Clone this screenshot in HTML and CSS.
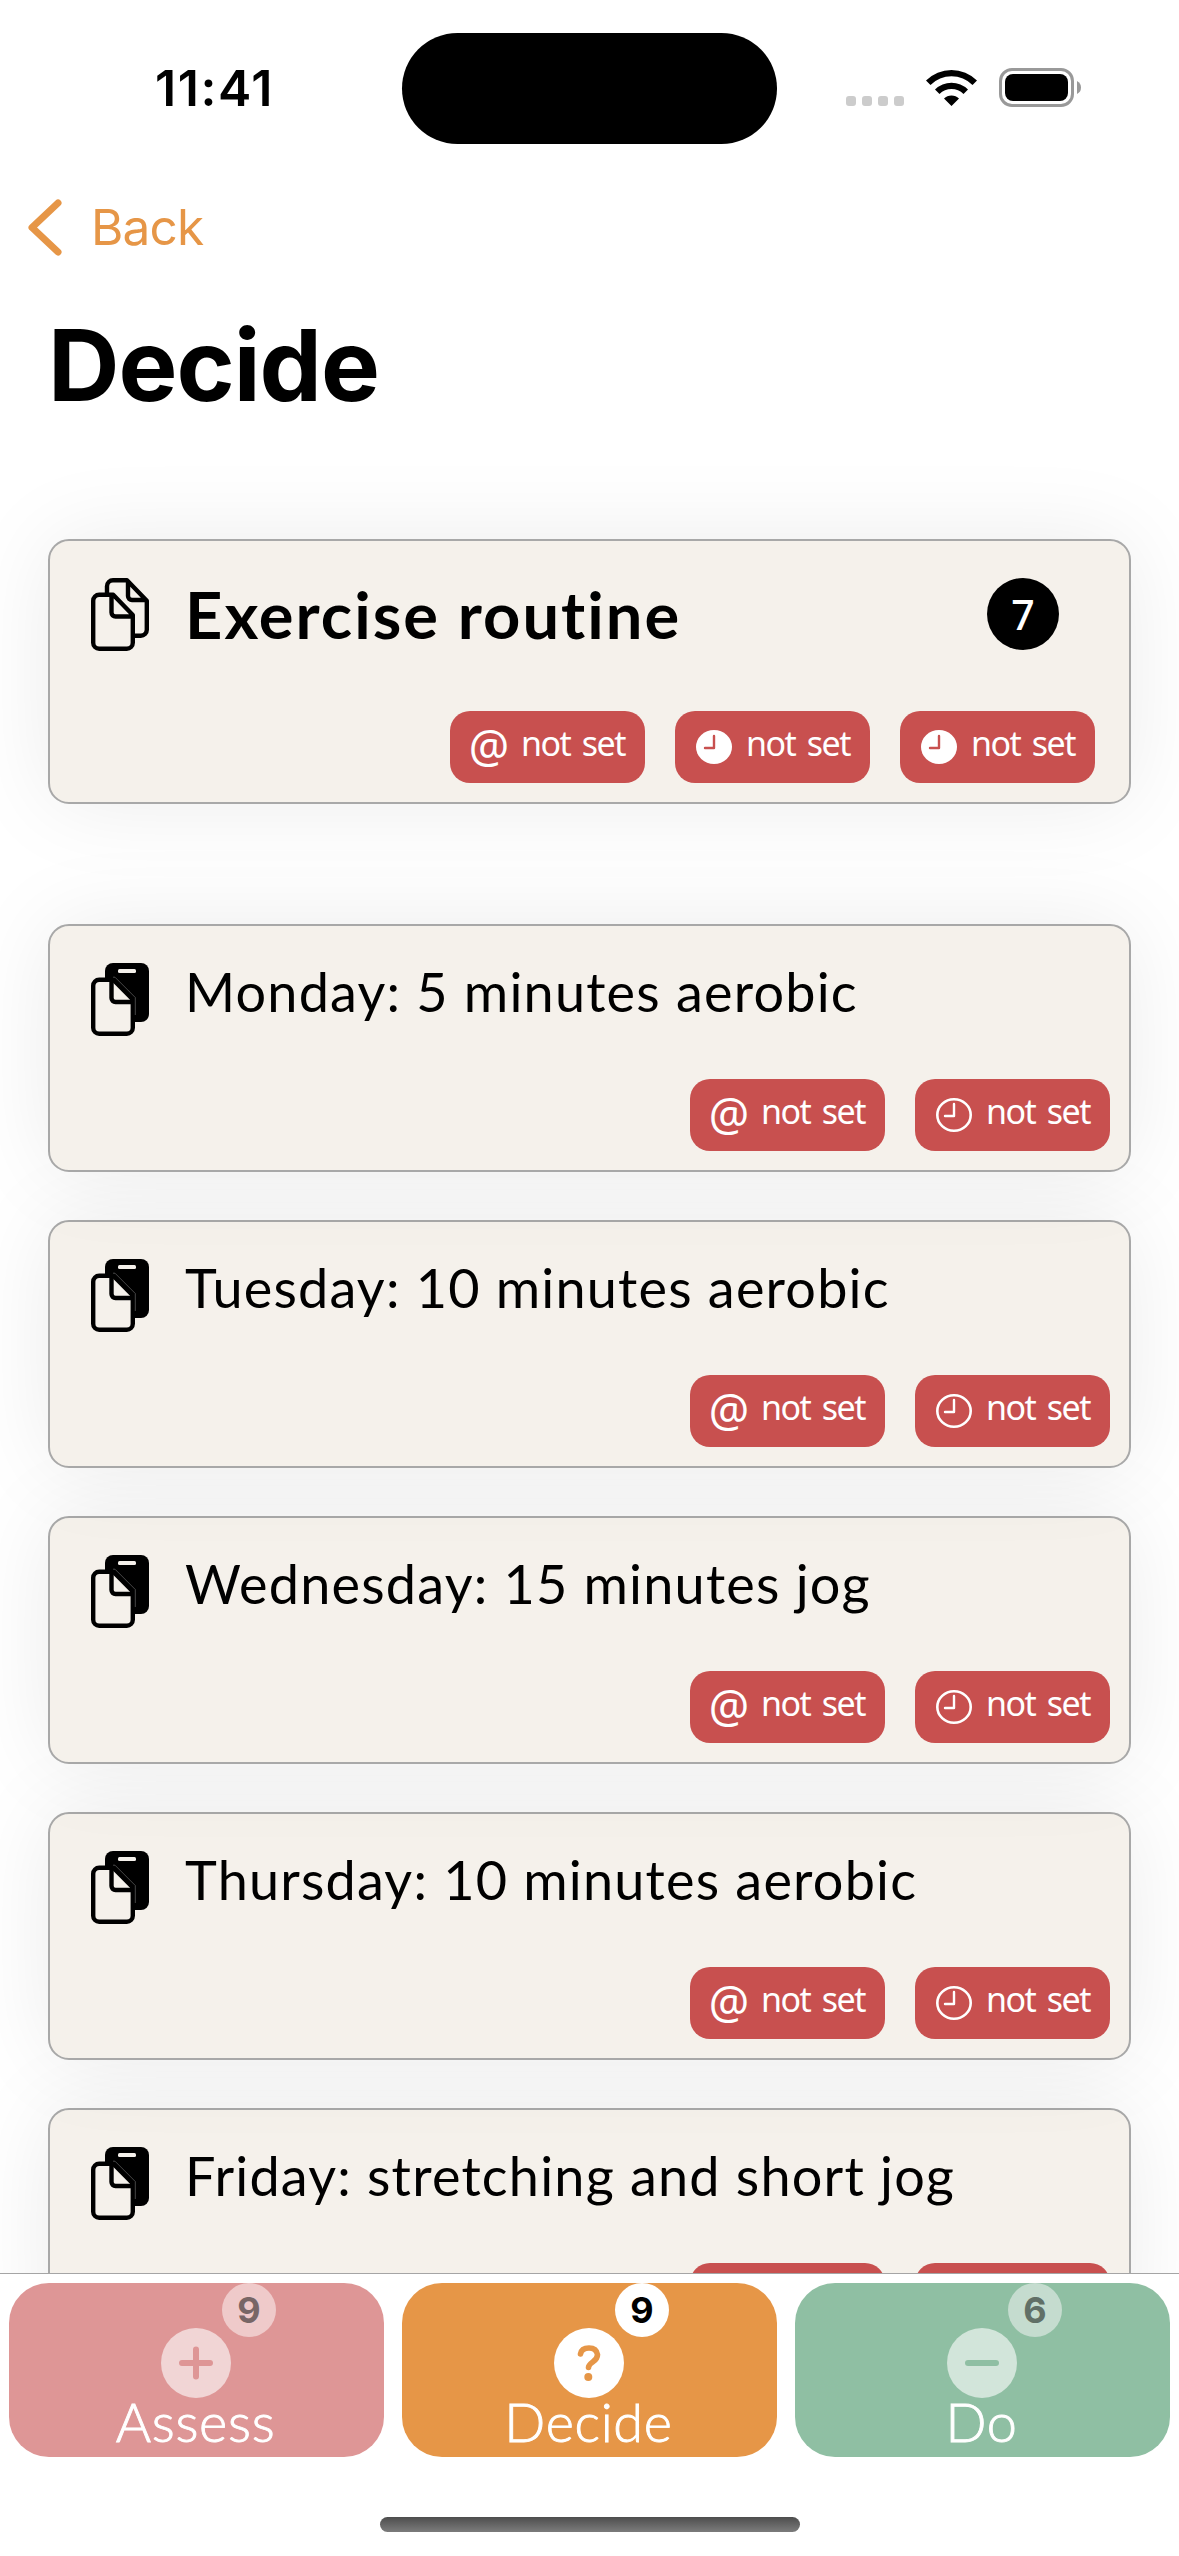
FILE: index.html
```
<!DOCTYPE html>
<html lang="en">
<head>
<meta charset="utf-8">
<title>Decide</title>
<link rel="stylesheet" href="styles.css">
</head>
<body>
<svg class="symbols" aria-hidden="true">
  <symbol id="docs" viewBox="0 0 58 73">
    <path d="M16 15V8.200a6 6 0 0 1 6-6h14l19.800 20.500v29a6 6 0 0 1-6 6h-6M37 2.500v15.500a4 4 0 0 0 4 4h14.500" fill="none" stroke="#000" stroke-width="4.400" stroke-linejoin="round"/>
    <path d="M8.200 16.700h14l19.600 20.300v27.800a6 6 0 0 1-6 6H8.200a6 6 0 0 1-6-6v-42.100a6 6 0 0 1 6-6zM20.500 17v17.500a4 4 0 0 0 4 4h17" fill="none" stroke="#000" stroke-width="4.400" stroke-linejoin="round"/>
  </symbol>
  <symbol id="docs-filled" viewBox="0 0 58 73">
    <rect x="14" y="0" width="44" height="59" rx="8"/>
    <rect x="27" y="6" width="18" height="4" rx="1.500" fill="#f5f1eb"/>
    <path d="M8.200 16.700h14l19.600 19.800v28.300a6 6 0 0 1-6 6H8.200a6 6 0 0 1-6-6v-42.100a6 6 0 0 1 6-6z" fill="#f5f1eb" stroke="#000" stroke-width="4.400"/>
    <path d="M20.500 17v18a4 4 0 0 0 4 4h17.500" fill="none" stroke="#000" stroke-width="4.400"/>
    <path d="M22 14.200h2l20.300 20.300V52" fill="none" stroke="#777" stroke-width=".6"/>
  </symbol>
  <symbol id="clock" viewBox="0 0 36 34">
    <ellipse cx="18" cy="17" rx="16.700" ry="15.700" fill="none" stroke="#fff" stroke-width="2.600"/>
    <path d="M18 6v12H9" fill="none" stroke="#fff" stroke-width="2.400" stroke-linecap="round" stroke-linejoin="round"/>
  </symbol>
  <symbol id="clock-filled" viewBox="0 0 36 34">
    <ellipse cx="18" cy="17" rx="18" ry="17" fill="#fff"/>
    <path d="M18 6v12H9" fill="none" stroke="#c8504f" stroke-width="2.400" stroke-linecap="round" stroke-linejoin="round"/>
  </symbol>
</svg>

<header class="status">
  <span class="time">11:41</span>
  <span class="island"></span>
  <div class="indicators">
    <div class="signal"><i></i><i></i><i></i><i></i></div>
    <svg class="wifi" viewBox="0 0 51 37"><path d="M0 11.500a36 36 0 0 1 51 0l-4.500 4.500a29.700 29.700 0 0 0-42 0zM9 20.500a23.500 23.500 0 0 1 33 0l-4.500 4.500a17 17 0 0 0-24 0zM18 29.500a10.600 10.600 0 0 1 15 0L25.500 37z"/></svg>
    <svg class="battery" viewBox="0 0 82 39"><rect x="1.500" y="1.500" width="72" height="36" rx="11.500" fill="none" stroke="#999" stroke-width="3"/><rect x="6" y="6" width="63" height="27" rx="8"/><path d="M78 13q4 2 4 6.500t-4 6.500z" fill="#999"/></svg>
  </div>
</header>

<nav class="nav">
  <svg class="chevron" viewBox="0 0 34 57"><path d="M30 4L4 28.500L30 53" fill="none" stroke="#e69647" stroke-width="7" stroke-linecap="round" stroke-linejoin="round"/></svg>
  <span class="back">Back</span>
</nav>
<h1 class="title">Decide</h1>

<main class="list">
  <article class="card card-main">
    <div class="row">
      <svg class="doc"><use href="#docs"/></svg>
      <h2 class="name name-main">Exercise routine</h2>
      <span class="count">7</span>
    </div>
    <div class="pills">
      <span class="pill"><b class="at">@</b><span class="label">not set</span></span>
      <span class="pill"><svg class="clock"><use href="#clock-filled"/></svg><span class="label">not set</span></span>
      <span class="pill"><svg class="clock"><use href="#clock-filled"/></svg><span class="label">not set</span></span>
    </div>
  </article>
  <article class="card">
    <div class="row"><svg class="doc"><use href="#docs-filled"/></svg><span class="name">Monday: 5 minutes aerobic</span></div>
    <div class="pills">
      <span class="pill"><b class="at">@</b><span class="label">not set</span></span>
      <span class="pill"><svg class="clock"><use href="#clock"/></svg><span class="label">not set</span></span>
    </div>
  </article>
  <article class="card">
    <div class="row"><svg class="doc"><use href="#docs-filled"/></svg><span class="name">Tuesday: 10 minutes aerobic</span></div>
    <div class="pills">
      <span class="pill"><b class="at">@</b><span class="label">not set</span></span>
      <span class="pill"><svg class="clock"><use href="#clock"/></svg><span class="label">not set</span></span>
    </div>
  </article>
  <article class="card">
    <div class="row"><svg class="doc"><use href="#docs-filled"/></svg><span class="name">Wednesday: 15 minutes jog</span></div>
    <div class="pills">
      <span class="pill"><b class="at">@</b><span class="label">not set</span></span>
      <span class="pill"><svg class="clock"><use href="#clock"/></svg><span class="label">not set</span></span>
    </div>
  </article>
  <article class="card">
    <div class="row"><svg class="doc"><use href="#docs-filled"/></svg><span class="name">Thursday: 10 minutes aerobic</span></div>
    <div class="pills">
      <span class="pill"><b class="at">@</b><span class="label">not set</span></span>
      <span class="pill"><svg class="clock"><use href="#clock"/></svg><span class="label">not set</span></span>
    </div>
  </article>
  <article class="card">
    <div class="row"><svg class="doc"><use href="#docs-filled"/></svg><span class="name">Friday: stretching and short jog</span></div>
    <div class="pills">
      <span class="pill"></span>
      <span class="pill"></span>
    </div>
  </article>
</main>

<footer class="tabs">
  <div class="tab assess">
    <span class="badge">9</span>
    <svg class="glyph" viewBox="0 0 70 70"><circle cx="35" cy="35" r="35" fill="#f1d5d5"/><path d="M35 21.500v27M21 35h28" stroke="#de9696" stroke-width="6" stroke-linecap="round"/></svg>
    <span class="tab-name">Assess</span>
  </div>
  <div class="tab decide">
    <span class="badge">9</span>
    <svg class="glyph" viewBox="0 0 70 70"><circle cx="35" cy="35" r="35" fill="#fff"/><path d="M26.500 26q1-6 8.500-6t8.500 6.700q0 4-4.800 7.300-4.200 3-4.200 5.500" fill="none" stroke="#e69647" stroke-width="5.600" stroke-linecap="round"/><circle cx="34.300" cy="49" r="4" fill="#e69647"/></svg>
    <span class="tab-name">Decide</span>
  </div>
  <div class="tab do">
    <span class="badge">6</span>
    <svg class="glyph" viewBox="0 0 70 70"><circle cx="35" cy="35" r="35" fill="#d2e5da"/><path d="M21 35h28" stroke="#8fbfa3" stroke-width="6" stroke-linecap="round"/></svg>
    <span class="tab-name">Do</span>
  </div>
</footer>
<div class="home"></div>
</body>
</html>
```
FILE: styles.css
```
* { box-sizing: border-box; }
body {
  margin: 0;
  width: 1179px;
  height: 2556px;
  overflow: hidden;
  display: flex;
  flex-direction: column;
  background: #fff;
  color: #000;
  font-family: Inter, "Liberation Sans", sans-serif;
}
.symbols { position: absolute; width: 0; height: 0; }
svg { display: block; flex: none; }

.status {
  height: 177px;
  flex: none;
  display: grid;
  grid-template-columns: 402px 375px 402px;
  padding-top: 33px;
}
.time {
  height: 111px;
  padding-left: 155px;
  line-height: 110px;
  font-size: 50px;
  font-weight: 600;
  letter-spacing: 1.6px;
}
.island { height: 111px; border-radius: 56px; background: #000; }
.indicators { height: 111px; display: flex; align-items: flex-start; padding: 35px 0 0 69px; }
.signal { display: flex; gap: 6px; padding-top: 28px; margin-right: 22px; }
.signal i { width: 10px; height: 10px; border-radius: 3px; background: #ccc; }
.wifi { width: 51px; height: 37px; margin: 1px 22px 0 0; }
.battery { width: 82px; height: 39px; }

.nav { height: 100px; flex: none; display: flex; align-items: center; padding-left: 28px; }
.chevron { width: 34px; height: 57px; margin-right: 29px; }
.back { color: #e69647; font-size: 49.5px; line-height: 60px; letter-spacing: -0.8px; }
.title {
  margin: 0;
  height: 177px;
  flex: none;
  padding: 28px 0 0 48px;
  font-size: 99px;
  line-height: 120px;
  font-weight: 700;
  letter-spacing: -1px;
}

.list {
  height: 1819px;
  flex: none;
  display: flex;
  flex-direction: column;
  gap: 48px;
  padding: 85px 48px 0;
  overflow: hidden;
}
.card {
  position: relative;
  height: 248px;
  flex: none;
  display: flex;
  flex-direction: column;
  justify-content: space-between;
  padding: 37px 19px 19px 41px;
  border: 2px solid #a8a8a8;
  border-radius: 21px;
  background: #f5f1eb;
  box-shadow: 0 0 90px rgba(0, 0, 0, 0.08);
}
.card:nth-child(1) { z-index: 6; }
.card:nth-child(2) { z-index: 5; }
.card:nth-child(3) { z-index: 4; }
.card:nth-child(4) { z-index: 3; }
.card:nth-child(5) { z-index: 2; }
.card-main { height: 265px; margin-bottom: 72px; padding-right: 34px; }
.row { display: flex; height: 73px; }
.doc { width: 58px; height: 73px; margin-right: 36px; }
.name {
  font-family: Lato, "Open Sans", sans-serif;
  font-size: 54px;
  line-height: 58px;
  font-weight: 400;
  letter-spacing: 1.2px;
  white-space: nowrap;
}
.name-main { margin: 0; font-size: 65px; line-height: 73px; font-weight: 700; letter-spacing: 2px; }
.count {
  width: 72px;
  height: 72px;
  margin: 0 36px 0 auto;
  border-radius: 50%;
  background: #000;
  color: #fff;
  font: 500 41px/72px "Noto Sans", sans-serif;
  text-align: center;
}
.pills { display: flex; justify-content: flex-end; gap: 30px; }
.pill {
  width: 195px;
  height: 72px;
  display: flex;
  align-items: center;
  padding-left: 21px;
  border-radius: 20px;
  background: #c8504f;
  color: #fff;
  font-family: "Noto Sans", sans-serif;
}
.at {
  width: 36px;
  height: 72px;
  display: flex;
  justify-content: center;
  margin-right: 14px;
  font-weight: 400;
  font-size: 45px;
  line-height: 69px;
}
.clock { width: 36px; height: 34px; margin-right: 14px; }
.label { font-size: 34px; line-height: 65px; height: 72px; letter-spacing: -1.5px; word-spacing: 4px; white-space: nowrap; }

.tabs {
  height: 185px;
  flex: none;
  display: flex;
  gap: 18px;
  padding: 9px 9px 0;
  border-top: 1px solid #a5a5a5;
}
.tab {
  position: relative;
  width: 375px;
  height: 174px;
  display: flex;
  flex-direction: column;
  align-items: center;
  padding: 45px 2px 0 0;
  border-radius: 40px;
  color: #fff;
}
.assess { background: #de9696; }
.decide { background: #e69647; }
.do { background: #8fbfa3; }
.glyph { width: 70px; height: 70px; }
.badge {
  position: absolute;
  left: 213px;
  top: 0;
  width: 54px;
  height: 54px;
  border-radius: 50%;
  background: #fff;
  color: #000;
  font: 700 36px/54px Inter, "Liberation Sans", sans-serif;
  text-align: center;
}
.assess .badge { background: #efcaca; color: #786666; }
.do .badge { background: #c5dccf; color: #617067; }
.tab-name {
  font: 300 54px/56px Lato, sans-serif;
  letter-spacing: 0.7px;
  margin-top: -4px;
  -webkit-text-stroke: 0.9px #fff;
}
.home {
  width: 420px;
  height: 15px;
  flex: none;
  margin: 59px auto 0;
  border-radius: 8px;
  background: linear-gradient(#4d4d4d, #7c7c7c);
}
```
